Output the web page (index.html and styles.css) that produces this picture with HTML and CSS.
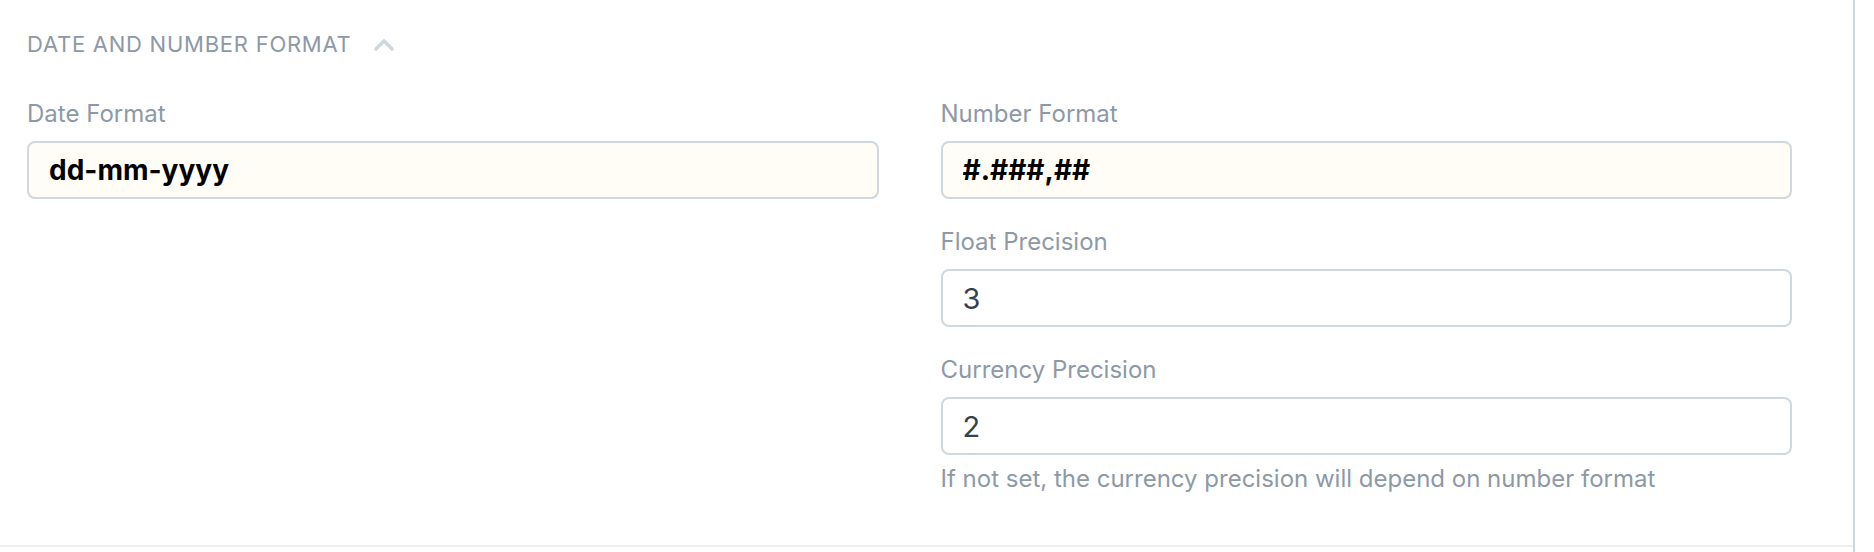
FILE: index.html
```html
<!DOCTYPE html>
<html lang="en">
<head>
<meta charset="utf-8">
<title>Date and Number Format</title>
<link rel="stylesheet" href="styles.css">
</head>
<body>
<div class="page">
  <section class="section">
    <div class="section-head">
      <span class="section-title">DATE AND NUMBER FORMAT</span>
      <svg class="chevron" width="20" height="13" viewBox="0 0 20 13" aria-hidden="true">
        <polyline points="2,11 10,3 18,11" fill="none" stroke="#d1d8dd" stroke-width="3.6" stroke-linecap="round" stroke-linejoin="round"/>
      </svg>
    </div>
    <div class="columns">
      <div class="column">
        <div class="field">
          <label class="label">Date Format</label>
          <input class="control bold" type="text" value="dd-mm-yyyy">
        </div>
      </div>
      <div class="column">
        <div class="field">
          <label class="label">Number Format</label>
          <input class="control bold" type="text" value="#.###,##">
        </div>
        <div class="field">
          <label class="label">Float Precision</label>
          <input class="control" type="text" value="3">
        </div>
        <div class="field last">
          <label class="label">Currency Precision</label>
          <input class="control" type="text" value="2">
          <p class="help">If not set, the currency precision will depend on number format</p>
        </div>
      </div>
    </div>
  </section>
</div>
</body>
</html>
```

FILE: styles.css
```css
html, body {
  margin: 0;
  padding: 0;
  background: #ffffff;
}

body {
  font-family: "Inter", "Liberation Sans", sans-serif;
  color: #36414c;
}

.page {
  width: 1853px;
  min-height: 552px;
  border-right: 2px solid #d1d8dd;
}

.section {
  padding: 29px 61px 52px 27px;
  border-bottom: 2px solid #ebeff2;
}

.section-head {
  display: flex;
  align-items: center;
  gap: 22px;
  height: 30px;
}

.section-title {
  font-size: 22px;
  line-height: 30px;
  letter-spacing: 0.75px;
  color: #8d99a6;
}

.chevron {
  display: block;
}

.columns {
  display: grid;
  grid-template-columns: 1fr 1fr;
  column-gap: 62px;
  margin-top: 40px;
}

.column {
  display: flex;
  flex-direction: column;
}

.field {
  display: flex;
  flex-direction: column;
  margin-bottom: 28px;
}

.field.last {
  margin-bottom: 0;
}

.label {
  font-size: 24px;
  line-height: 30px;
  color: #8d99a6;
  margin-bottom: 12px;
}

.control {
  box-sizing: border-box;
  width: 100%;
  height: 58px;
  margin: 0;
  padding: 0 20px;
  border: 2px solid #d1d8dd;
  border-radius: 8px;
  background: #ffffff;
  font-family: "Inter", "Liberation Sans", sans-serif;
  font-size: 29px;
  color: #36414c;
  outline: none;
}

.control.bold {
  background: #fffdf5;
  font-weight: 700;
  font-size: 28px;
  color: #000000;
}

.help {
  margin: 10px 0 0;
  font-size: 24px;
  line-height: 28px;
  color: #8d99a6;
}
```
